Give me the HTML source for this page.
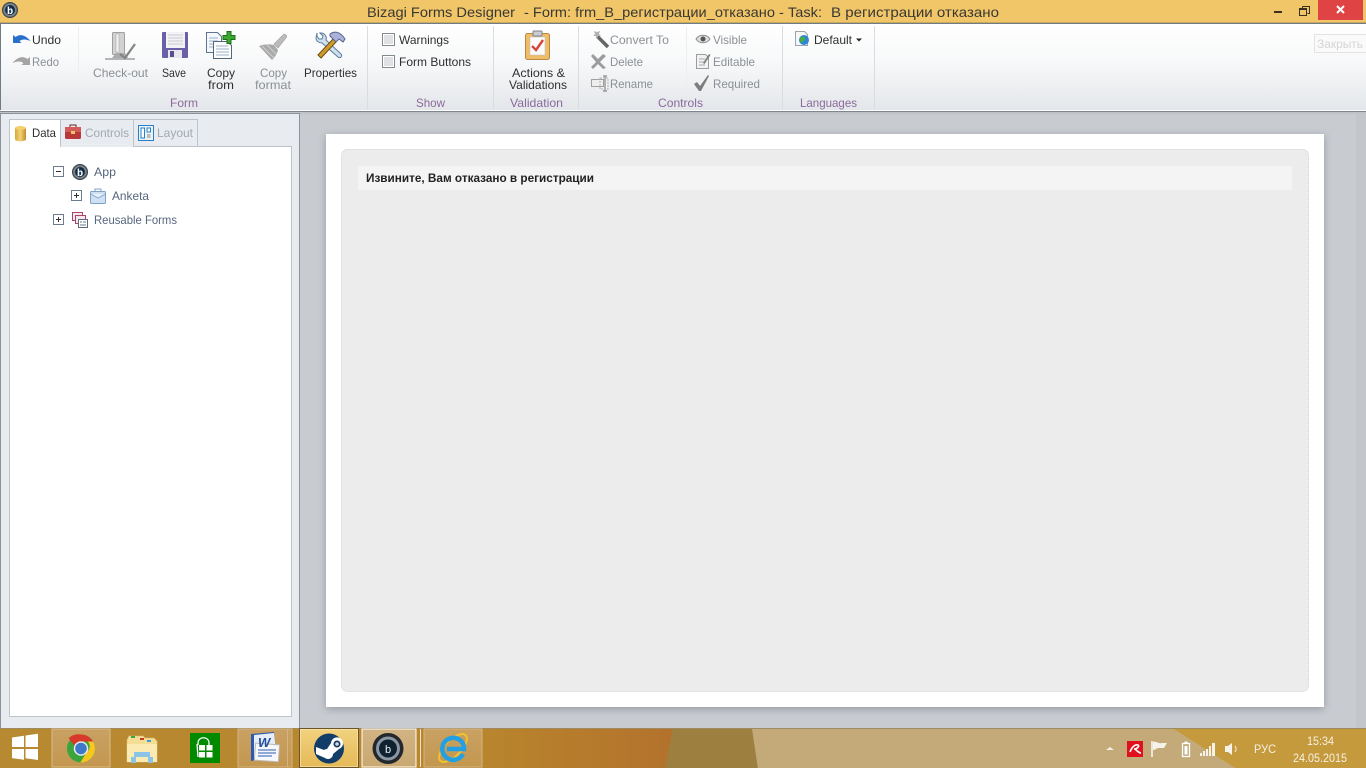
<!DOCTYPE html>
<html><head><meta charset="utf-8"><title>Bizagi Forms Designer</title>
<style>
html,body{margin:0;padding:0;width:1366px;height:768px;overflow:hidden;background:#c8ccd1}
svg{display:block}
text{font-family:"Liberation Sans","Noto Sans CJK SC",sans-serif;font-size:12px;fill:#2f2f2f;white-space:pre}
.g{fill:#8b9095}.p{fill:#8a6a9a}.t{fill:#56667c}.d{fill:#a3a9b0}
.w{fill:#f6f0e2}
</style></head><body>
<svg width="1366" height="768" viewBox="0 0 1366 768" xmlns="http://www.w3.org/2000/svg">
<defs>
<linearGradient id="rib" x1="0" y1="0" x2="0" y2="1"><stop offset="0" stop-color="#fff"/><stop offset=".45" stop-color="#f7f8f9"/><stop offset="1" stop-color="#e3e6ea"/></linearGradient>
<linearGradient id="bar" x1="0" y1="0" x2="1" y2="0"><stop offset="0" stop-color="#b78a32"/><stop offset=".7" stop-color="#b9862d"/><stop offset="1" stop-color="#b3722c"/></linearGradient>
<linearGradient id="btn" x1="0" y1="0" x2="0" y2="1"><stop offset="0" stop-color="#c9a163"/><stop offset="1" stop-color="#c3974f"/></linearGradient>
<linearGradient id="btnA" x1="0" y1="0" x2="0" y2="1"><stop offset="0" stop-color="#f2d27f"/><stop offset="1" stop-color="#e5b957"/></linearGradient>
<linearGradient id="btnB" x1="0" y1="0" x2="0" y2="1"><stop offset="0" stop-color="#d2b383"/><stop offset="1" stop-color="#c9a871"/></linearGradient>
<linearGradient id="gold" x1="0" y1="0" x2="1" y2="0"><stop offset="0" stop-color="#d9a63c"/><stop offset=".5" stop-color="#f3d377"/><stop offset="1" stop-color="#c08a2a"/></linearGradient>
<radialGradient id="biz"><stop offset="0" stop-color="#1d4d79"/><stop offset=".55" stop-color="#123"/><stop offset=".7" stop-color="#8d99a5"/><stop offset="1" stop-color="#2a2f36"/></radialGradient>
<filter id="sh" x="-5%" y="-5%" width="110%" height="110%"><feGaussianBlur stdDeviation="4"/></filter>
</defs>

<!-- title bar -->
<rect width="1366" height="24" fill="#f0c668"/>
<rect y="22" width="1366" height="1" fill="#c9a95e"/>
<rect y="23" width="1366" height="1" fill="#6f7b85"/>
<circle cx="10" cy="10" r="8" fill="url(#biz)"/>
<text x="7" y="14" style="font-size:10px;font-weight:bold;fill:#fff">b</text>
<text x="367" y="17" textLength="148" lengthAdjust="spacingAndGlyphs" style="font-size:14px;fill:#3a3833">Bizagi Forms Designer</text>
<text x="524" y="17" textLength="298" lengthAdjust="spacingAndGlyphs" style="font-size:14px;fill:#3a3833">- Form: frm_B_регистрации_отказано - Task:</text>
<text x="831" y="17" textLength="168" lengthAdjust="spacingAndGlyphs" style="font-size:14px;fill:#3a3833">В регистрации отказано</text>
<rect x="1274" y="11" width="8" height="2" fill="#3a3020"/>
<path d="M1302.500 6.500h7v7h-2M1299.500 9.500h7v6h-7z M1302.500 6.500v3" fill="none" stroke="#3a3020"/><rect x="1299" y="8" width="8" height="2" fill="#3a3020"/>
<rect x="1318" y="0" width="45" height="20" fill="#e04343"/>
<path d="M1337 6l7 7M1344 6l-7 7" stroke="#fff" stroke-width="2"/>

<!-- ribbon -->
<rect x="0" y="24" width="1366" height="87" fill="url(#rib)"/>
<rect x="0" y="24" width="1" height="88" fill="#6f7b85"/>
<rect x="0" y="110" width="1366" height="1" fill="#fff"/>
<rect x="0" y="111" width="1366" height="1" fill="#7d868f"/>
<rect x="0" y="112" width="1366" height="2" fill="#bfc3c8"/>
<g fill="#d9dce0">
<rect x="78" y="27" width="1" height="44" fill="#eceef0"/>
<rect x="367" y="26" width="1" height="84"/><rect x="493" y="26" width="1" height="84"/><rect x="578" y="26" width="1" height="84"/><rect x="782" y="26" width="1" height="84"/><rect x="874" y="26" width="1" height="84"/>
<rect x="686" y="27" width="1" height="66" fill="#eceef0"/>
</g>

<!-- undo/redo -->
<path d="M13 43v-8l2.500 2c4-3 9-3 15 4-5-2-8-2-11 0l2 2z" fill="#2a6fc9"/>
<text x="32" y="44" textLength="29" lengthAdjust="spacingAndGlyphs">Undo</text>
<path d="M30 65v-8l-2.500 2c-4-3-9-3-15 4 5-2 8-2 11 0l-2 2z" fill="#a4a4a4"/>
<text x="32" y="66" textLength="27" lengthAdjust="spacingAndGlyphs" class="g">Redo</text>

<!-- check-out -->
<rect x="112.500" y="32.500" width="12" height="22" rx="1" fill="#d2d2d2" stroke="#9f9f9f"/><rect x="116" y="34" width="3" height="18" fill="#f2f2f2" stroke="#aaa" stroke-width=".6"/>
<rect x="105" y="58" width="30" height="2" fill="#b5b5b5"/><path d="M112 58l4-5h9l3 5z" fill="#aaa"/>
<path d="M120 54l5 4 10-14" fill="none" stroke="#858585" stroke-width="2.200"/>
<text x="93" y="77" textLength="55" lengthAdjust="spacingAndGlyphs" class="g">Check-out</text>

<!-- save -->
<rect x="162" y="32" width="26" height="26" rx="1" fill="#6c5fa8"/><rect x="166" y="32" width="19" height="16" fill="#f3f3f6"/><path d="M168 35h15M168 38h15M168 41h15M168 44h15" stroke="#c8c8d2"/><rect x="168" y="50" width="14" height="8" fill="#e8e8ee"/><rect x="170" y="51" width="4" height="6" fill="#5a4f8e"/>
<text x="162" y="77" textLength="24" lengthAdjust="spacingAndGlyphs">Save</text>

<!-- copy from -->
<path d="M206.500 32.500h11l4 4v16h-15z" fill="#f4f7fb" stroke="#5d7590"/><path d="M209 38h9M209 41h9M209 44h9M209 47h4" stroke="#9db1c8"/>
<path d="M213.500 41.500h14l4 4v13h-18z" fill="#fdfdfe" stroke="#53677d"/><path d="M216 46h12M216 49h13M216 52h13M216 55h13" stroke="#9db1c8"/>
<path d="M227 31.500h4v4h4v4h-4v4h-4v-4h-4v-4h4z" fill="#3aa82e" stroke="#1c6f18"/>
<text x="207" y="77" textLength="28" lengthAdjust="spacingAndGlyphs">Copy</text><text x="208" y="89" textLength="26" lengthAdjust="spacingAndGlyphs">from</text>

<!-- copy format -->
<path d="M259 46l13 14c3-3 5-6 6-10l-4-5c-4-1-10-1-15 1z" fill="#a9a9a9"/><path d="M274 44l9-9c2-2 5 1 3 3l-8 10z" fill="#bbb" stroke="#a0a0a0" stroke-width=".6"/><path d="M262 46l12 12M267 45l9 9" stroke="#cfcfcf"/>
<text x="260" y="77" textLength="27" lengthAdjust="spacingAndGlyphs" class="g">Copy</text><text x="255" y="89" textLength="36" lengthAdjust="spacingAndGlyphs" class="g">format</text>

<!-- properties -->
<path d="M317 33l-1 5c0 3 3 5 6 5l16 14c2 2 5-1 3-3L326 40c1-3-1-7-5-7l-1 0 3 3-1 3-3 0-2-3z" fill="#cfe0f0" stroke="#5b7a9b"/>
<path d="M318 55l15-16 3 3-15 16z" fill="#cf9b2b" stroke="#6d4d10"/>
<path d="M330 34c4-3 10-3 15 5l-2 3-4-3-3 3-6-6z" fill="#aab2d9" stroke="#5a6390"/>
<text x="304" y="77" textLength="53" lengthAdjust="spacingAndGlyphs">Properties</text>
<text x="170" y="107" textLength="28" lengthAdjust="spacingAndGlyphs" class="p">Form</text>

<!-- show -->
<g fill="#fff" stroke="#858a8f"><rect x="382.500" y="33.500" width="12" height="12"/><rect x="382.500" y="55.500" width="12" height="12"/></g>
<g fill="#dfe1e4"><rect x="384" y="35" width="9" height="9"/><rect x="384" y="57" width="9" height="9"/></g>
<text x="399" y="44" textLength="50" lengthAdjust="spacingAndGlyphs">Warnings</text><text x="399" y="66" textLength="72" lengthAdjust="spacingAndGlyphs">Form Buttons</text>
<text x="416" y="107" textLength="29" lengthAdjust="spacingAndGlyphs" class="p">Show</text>

<!-- validation -->
<rect x="525.500" y="33.500" width="24" height="26" rx="2" fill="#efbc6a" stroke="#b78a3f"/><rect x="530" y="37" width="15" height="18" fill="#fbfbfb" stroke="#c2c2c2" stroke-width=".6"/>
<rect x="533" y="31" width="9" height="5" rx="1" fill="#c9ccd1" stroke="#80858b"/>
<path d="M532 46l4 4 7-10" fill="none" stroke="#d8453a" stroke-width="2.400"/>
<text x="512" y="77" textLength="53" lengthAdjust="spacingAndGlyphs">Actions &amp;</text><text x="509" y="89" textLength="58" lengthAdjust="spacingAndGlyphs">Validations</text>
<text x="510" y="107" textLength="53" lengthAdjust="spacingAndGlyphs" class="p">Validation</text>

<!-- controls -->
<path d="M597 36l11 11" stroke="#666" stroke-width="3.500"/><path d="M594 31l1 3-2 2 3 0 1 3 1-3 3 0-2-2 1-3-3 1z" fill="#b3b3b3"/>
<text x="610" y="44" textLength="59" lengthAdjust="spacingAndGlyphs" class="g">Convert To</text>
<path d="M593 54l5 5 5-5 3 2-6 6 6 6-3 1-5-5-5 5-2-2 5-5-5-6z" fill="#9c9c9c"/>
<text x="610" y="66" textLength="33" lengthAdjust="spacingAndGlyphs" class="g">Delete</text>
<rect x="591.500" y="79.500" width="12" height="7" fill="#eee" stroke="#a0a0a0"/><path d="M603 76h4M603 91h4M605 76v15" stroke="#8a8a8a" stroke-width="1.200"/><rect x="600" y="78" width="8" height="11" fill="none" stroke="#b0b0b0" stroke-dasharray="2 1"/>
<text x="610" y="88" textLength="43" lengthAdjust="spacingAndGlyphs" class="g">Rename</text>

<path d="M696 39c3-5 11-5 14 0-3 5-11 5-14 0z" fill="#dedede" stroke="#8d8d8d"/><circle cx="703" cy="39" r="2.500" fill="#555"/>
<text x="713" y="44" textLength="34" lengthAdjust="spacingAndGlyphs" class="g">Visible</text>
<path d="M696.500 54.500h9l3 3v11h-12z" fill="#f2f2f2" stroke="#9c9c9c"/><path d="M699 59h6M699 62h6M699 65h6" stroke="#a8a8a8"/><path d="M703 63l6-9 1.500 1-6 9z" fill="#7e7e7e"/>
<text x="713" y="66" textLength="42" lengthAdjust="spacingAndGlyphs" class="g">Editable</text>
<path d="M694 84l3-2 3 4 8-11 1 1-8 15h-2z" fill="#7d7d7d"/>
<text x="713" y="88" textLength="47" lengthAdjust="spacingAndGlyphs" class="g">Required</text>
<text x="658" y="107" textLength="45" lengthAdjust="spacingAndGlyphs" class="p">Controls</text>

<!-- languages -->
<path d="M795.500 31.500h9l3 3v11h-12z" fill="#f7f7f7" stroke="#9aa4ae"/>
<circle cx="804" cy="40" r="5" fill="#2f86d6"/><path d="M801 37c2-1 4 0 4 2s-3 2-3 4c-2-1-3-4-1-6z" fill="#49ad3a"/>
<text x="814" y="44" textLength="38" lengthAdjust="spacingAndGlyphs">Default</text>
<path d="M856 38.500h6l-3 3z" fill="#222"/>
<text x="800" y="107" textLength="57" lengthAdjust="spacingAndGlyphs" class="p">Languages</text>

<!-- close ghost -->
<rect x="1314.500" y="34.500" width="60" height="18" fill="#fafafa" stroke="#e4e4e4"/>
<text x="1317" y="48" textLength="46" lengthAdjust="spacingAndGlyphs" style="fill:#d5d5d5">Закрыть</text>

<!-- left panel -->
<rect x="0" y="114" width="299" height="614" fill="#e8ebef"/>
<rect x="0" y="113" width="300" height="1" fill="#8b9299"/>
<rect x="299" y="113" width="1" height="615" fill="#8b9299"/>
<rect x="0" y="114" width="1" height="614" fill="#8b9299"/>
<rect x="9.500" y="146.500" width="282" height="570" fill="#fff" stroke="#bcc4cc"/>
<path d="M60.500 147v-27.500h73v27.500M133.500 119.500h64v27" fill="#e8ebef" stroke="#bcc4cc"/>
<path d="M9.500 147v-27.500h51v27.500" fill="#fff" stroke="#bcc4cc"/>
<rect x="10" y="146" width="50" height="2" fill="#fff"/>
<path d="M15 128v11c0 3 11 3 11 0v-11z" fill="url(#gold)"/><ellipse cx="20.500" cy="128" rx="5.500" ry="2" fill="#f3d16a"/>
<text x="32" y="137" textLength="24" lengthAdjust="spacingAndGlyphs">Data</text>
<rect x="65" y="127" width="16" height="12" rx="1.500" fill="#b8383a"/><rect x="65" y="127" width="16" height="5" fill="#d35b5a"/><path d="M70 127v-2h6v2" fill="none" stroke="#6d2525"/><rect x="71" y="131" width="4" height="3" fill="#e9c66c"/>
<text x="85" y="137" textLength="44" lengthAdjust="spacingAndGlyphs" class="d">Controls</text>
<rect x="138.500" y="125.500" width="15" height="15" fill="#eaf2fa" stroke="#2b7fc2"/><rect x="141" y="128" width="3.500" height="10" fill="#fff" stroke="#2b7fc2"/><rect x="147" y="128" width="3.500" height="4" fill="#fff" stroke="#2b7fc2"/><rect x="147" y="134" width="3.500" height="4" fill="#bbb"/>
<text x="157" y="137" textLength="36" lengthAdjust="spacingAndGlyphs" class="d">Layout</text>

<!-- tree -->
<rect x="53.500" y="166.500" width="10" height="10" fill="#fff" stroke="#6d7c8e"/><path d="M56 171.500h5" stroke="#333"/>
<circle cx="80" cy="172" r="8" fill="url(#biz)"/>
<text x="77" y="176" style="font-size:10px;font-weight:bold;fill:#fff">b</text>
<text x="94" y="176" textLength="22" lengthAdjust="spacingAndGlyphs" class="t">App</text>
<rect x="71.500" y="190.500" width="10" height="10" fill="#fff" stroke="#6d7c8e"/><path d="M74 195.500h5M76.500 193v5" stroke="#333"/>
<rect x="90.500" y="191.500" width="15" height="12" rx="1" fill="#cfe0f2" stroke="#7ea3c9"/><path d="M90.500 194l7.500 4 7.500-4" fill="#e9f1f9" stroke="#8fb0d2"/><path d="M95 191v-2h6v2" fill="none" stroke="#7ea3c9"/>
<text x="112" y="200" textLength="37" lengthAdjust="spacingAndGlyphs" class="t">Anketa</text>
<rect x="53.500" y="214.500" width="10" height="10" fill="#fff" stroke="#6d7c8e"/><path d="M56 219.500h5M58.500 217v5" stroke="#333"/>
<rect x="72.500" y="212.500" width="10" height="8" fill="#f6e8ee" stroke="#a8436c"/><rect x="75.500" y="215.500" width="10" height="8" fill="#f6e8ee" stroke="#a8436c"/><rect x="78.500" y="219.500" width="9" height="8" fill="#fff" stroke="#5d6a7c"/><path d="M80 222h2M83 222h3M80 225h6" stroke="#6b7788"/>
<text x="94" y="224" textLength="83" lengthAdjust="spacingAndGlyphs" class="t">Reusable Forms</text>

<!-- canvas -->
<rect x="300" y="114" width="1066" height="614" fill="#c8ccd1"/>
<rect x="1356" y="114" width="10" height="614" fill="#c3c7cc"/>
<rect x="326" y="136" width="998" height="573" fill="#6f7680" opacity=".6" filter="url(#sh)"/>
<rect x="326" y="134" width="998" height="573" fill="#fff"/>
<rect x="341.500" y="149.500" width="967" height="542" rx="6" fill="#ececec" stroke="#cfcfcf" stroke-dasharray="1 1"/>
<rect x="358" y="166" width="934" height="24" fill="#f4f4f4"/>
<text x="366" y="182" textLength="228" lengthAdjust="spacingAndGlyphs" style="font-weight:bold;fill:#222">Извините, Вам отказано в регистрации</text>

<!-- taskbar -->
<rect x="0" y="728" width="673" height="40" fill="url(#bar)"/>
<path d="M673 728H752L758 768H665z" fill="#9d8040"/>
<path d="M752 728H1172L1235 768H758z" fill="#c3aa78"/>
<path d="M1172 728H1366V768H1235z" fill="#c49a3c"/>
<rect y="728" width="1366" height="1" fill="#9b8a62"/>
<!-- start -->
<path d="M12 737.500l12-1.700v11.200H12zM25.500 735.500l12.500-1.800v13.300h-12.500zM12 749h12v10.800l-12-1.700zM25.500 749h12.500v11l-12.500-1.800z" fill="#fff"/>
<!-- chrome -->
<rect x="52" y="729" width="58" height="38" fill="url(#btn)" stroke="#d9bc8a"/>
<circle cx="81" cy="748.500" r="14" fill="#3ba43c"/>
<path d="M81 734.500a14 14 0 0 1 12.100 7H81a7 7 0 0 0-6.500 4.300l-5.900-7.600A14 14 0 0 1 81 734.500z" fill="#d8392b"/>
<path d="M93.100 741.500a14 14 0 0 1-12.800 21l6.600-10.500a7 7 0 0 0 .8-10.500z" fill="#f5c81e"/>
<circle cx="81" cy="748.500" r="6.500" fill="#3d78c9" stroke="#e8e8e8" stroke-width="1.500"/>
<!-- explorer -->
<path d="M127 740l2-4h14l2 2h9l3 3v21h-30z" fill="#f5dd93" stroke="#d9be72" stroke-width=".6"/>
<rect x="131" y="736" width="4" height="2" fill="#38a64a"/><rect x="140" y="738" width="4" height="2" fill="#c6382c"/><rect x="147" y="740" width="4" height="2" fill="#3aa0d8"/>
<path d="M127 744h30v18h-30z" fill="#fbeab2"/>
<path d="M131 763v-6h3v-5h16v5h3v6h-5v-6h-12v6z" fill="#8cc4e8"/>
<!-- store -->
<rect x="190" y="733" width="30" height="30" fill="#008a00"/>
<path d="M198 745v-2c0-7 11-7 11 0v2M197 744l1 13" fill="none" stroke="#fff" stroke-width="1.300"/>
<path d="M199 745h6v5.500h-6zM206.500 745h6v5.500h-6zM199 752h6v5.500h-6zM206.500 752h6v5.500h-6z" fill="#fff"/>
<!-- word -->
<rect x="238" y="729" width="54" height="38" fill="url(#btn)" stroke="#d4b486"/><path d="M287.500 729v38" stroke="#d4b486"/>
<path d="M251 734l23-2 3 24-26 5z" fill="#2c5ab0"/><path d="M254 735l20-2 3 24h-23z" fill="#e7edf7"/><rect x="255" y="744" width="24" height="17" transform="rotate(4 267 752)" fill="#f6f8fb" stroke="#bbb"/>
<text x="258" y="747" style="font-size:13px;font-weight:bold;font-style:italic;fill:#214e9e">W</text>
<path d="M258 750h18M258 753h18M258 756h14" stroke="#2c5ab0"/>
<!-- steam -->
<rect x="300" y="729" width="58" height="38" fill="url(#btnA)" stroke="#fff0c8"/>
<path d="M299.500 728.500h59v39h-59z" fill="none" stroke="#6b5428"/>
<circle cx="329" cy="748.500" r="15" fill="#123d68"/>
<path d="M316 754l9 4a5 5 0 0 0 8-4l6-5a6 6 0 1 0-8-6l-4 6a5 5 0 0 0-3 1l-8-3z" fill="#fff"/>
<circle cx="337" cy="744" r="3.500" fill="#123d68"/><circle cx="337" cy="744" r="1.800" fill="#d9d9d9"/>
<!-- bizagi -->
<rect x="362" y="729" width="54" height="38" fill="url(#btnB)" stroke="#fff"/><path d="M420.500 729v38" stroke="#f1e2c8"/>
<circle cx="388" cy="748.500" r="15.500" fill="#23282e"/><circle cx="388" cy="748.500" r="12" fill="#8b97a3"/><circle cx="388" cy="748.500" r="9" fill="#10212f"/>
<text x="385" y="753" style="font-size:11px;fill:#e6f0fa">b</text>
<!-- IE -->
<rect x="424" y="729" width="58" height="38" fill="url(#btn)" stroke="#d4b486"/>
<ellipse cx="453" cy="748" rx="18" ry="8" transform="rotate(-45 453 748)" fill="none" stroke="#f1c22e" stroke-width="2"/>
<path d="M463 754a11 11 0 1 1 1-7.500v2.500H447" fill="none" stroke="#22a0e3" stroke-width="4.500"/>

<!-- tray -->
<path d="M1106 750l4-3 4 3z" fill="#f4f0e6"/>
<rect x="1127" y="741" width="16" height="16" fill="#e0101d"/>
<path d="M1130 752c2-5 5-8 8-7 2 1-1 4-4 4M1135 749c2 2 4 4 6 4" fill="none" stroke="#fff" stroke-width="1.600"/>
<path d="M1152 741v16" stroke="#fff" stroke-width="1.400"/><path d="M1153 742c4-1 5 2 9 1h5l-3 5h-5c-3 0-3 2-6 2z" fill="#f5f2ea"/>
<rect x="1182.500" y="743.500" width="7" height="13" fill="none" stroke="#fff" stroke-width="1.300"/><rect x="1184.500" y="746" width="3" height="8.500" fill="#fff"/><rect x="1184.500" y="741.500" width="3" height="2" fill="#fff"/>
<g fill="#f5f2ea"><rect x="1200" y="753" width="2" height="3"/><rect x="1203" y="751" width="2" height="5"/><rect x="1206" y="749" width="2" height="7"/><rect x="1209" y="746" width="2" height="10"/><rect x="1212" y="743" width="3" height="13"/></g>
<path d="M1225 746h3l4-3v12l-4-3h-3z" fill="#f5f2ea"/><path d="M1235 746c1.500 2 1.500 4 0 6" stroke="#f5f2ea" fill="none"/>
<text x="1254" y="753" textLength="22" lengthAdjust="spacingAndGlyphs" class="w">РУС</text>
<text x="1307" y="745" textLength="27" lengthAdjust="spacingAndGlyphs" class="w">15:34</text>
<text x="1293" y="762" textLength="54" lengthAdjust="spacingAndGlyphs" class="w">24.05.2015</text>
</svg>
</body></html>
